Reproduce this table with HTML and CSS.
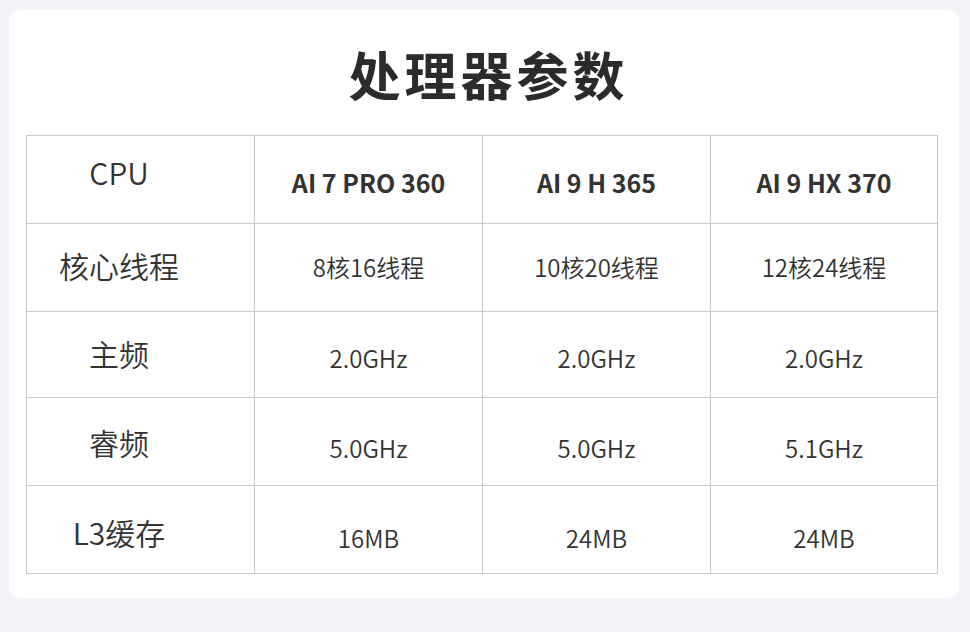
FILE: index.html
```html
<!DOCTYPE html>
<html lang="zh-CN">
<head>
<meta charset="utf-8">
<title>处理器参数</title>
<link rel="stylesheet" href="styles.css">
</head>
<body>
<main class="card">
  <h1 class="title">处理器参数</h1>
  <div class="spec-table">
    <div class="row r1">
      <div class="cell label label-cpu">CPU</div>
      <div class="cell head">AI 7 PRO 360</div>
      <div class="cell head">AI 9 H 365</div>
      <div class="cell head">AI 9 HX 370</div>
    </div>
    <div class="row r2">
      <div class="cell label">核心线程</div>
      <div class="cell value">8核16线程</div>
      <div class="cell value">10核20线程</div>
      <div class="cell value">12核24线程</div>
    </div>
    <div class="row r3">
      <div class="cell label">主频</div>
      <div class="cell value">2.0GHz</div>
      <div class="cell value">2.0GHz</div>
      <div class="cell value">2.0GHz</div>
    </div>
    <div class="row r4">
      <div class="cell label">睿频</div>
      <div class="cell value">5.0GHz</div>
      <div class="cell value">5.0GHz</div>
      <div class="cell value">5.1GHz</div>
    </div>
    <div class="row r5">
      <div class="cell label">L3缓存</div>
      <div class="cell value">16MB</div>
      <div class="cell value">24MB</div>
      <div class="cell value">24MB</div>
    </div>
  </div>
</main>
</body>
</html>
```

FILE: styles.css
```css
html, body {
  margin: 0;
  padding: 0;
}
body {
  background: #f3f4f9;
  font-family: "Noto Sans CJK SC", "Noto Sans", sans-serif;
  color: #333333;
  width: 970px;
  height: 632px;
  overflow: hidden;
}
.card {
  box-sizing: border-box;
  margin: 10px 0 0 9px;
  width: 950px;
  height: 588px;
  background: #ffffff;
  border-radius: 10px;
  padding: 38px 0 0 17px;
}
.title {
  margin: 0 0 35px 0;
  padding-left: 7px;
  width: 911px;
  text-align: center;
  font-size: 52px;
  line-height: 52px;
  font-weight: 700;
  letter-spacing: 4px;
  color: #2b2b2b;
}
.spec-table {
  display: grid;
  grid-template-columns: 227px 227px 227px 226px;
  grid-template-rows: 87px 87px 85px 87px 87px;
  gap: 1px;
  padding: 1px;
  width: 912px;
  box-sizing: border-box;
  background: #c9c9c9;
}
.row {
  display: contents;
}
.cell {
  background: #ffffff;
  display: flex;
  align-items: center;
  justify-content: center;
  box-sizing: border-box;
  line-height: 1;
  white-space: nowrap;
}
.label {
  font-size: 30px;
  font-weight: 350;
  padding-right: 43px;
  color: #333333;
}
.head {
  font-size: 25px;
  font-weight: 700;
  color: #333333;
}
.value {
  font-size: 24px;
  font-weight: 350;
  color: #333333;
}
.r1 .label-cpu { padding-bottom: 16px; }
.r1 .head { padding-top: 6px; }
.r2 .label { padding-bottom: 6px; }
.r2 .value { padding-bottom: 2px; }
.r3 .label { padding-bottom: 4px; }
.r3 .value { padding-top: 7px; }
.r4 .label { padding-top: 1px; }
.r4 .value { padding-top: 13px; }
.r5 .label { padding-top: 4px; }
.r5 .value { padding-top: 17px; }
```
